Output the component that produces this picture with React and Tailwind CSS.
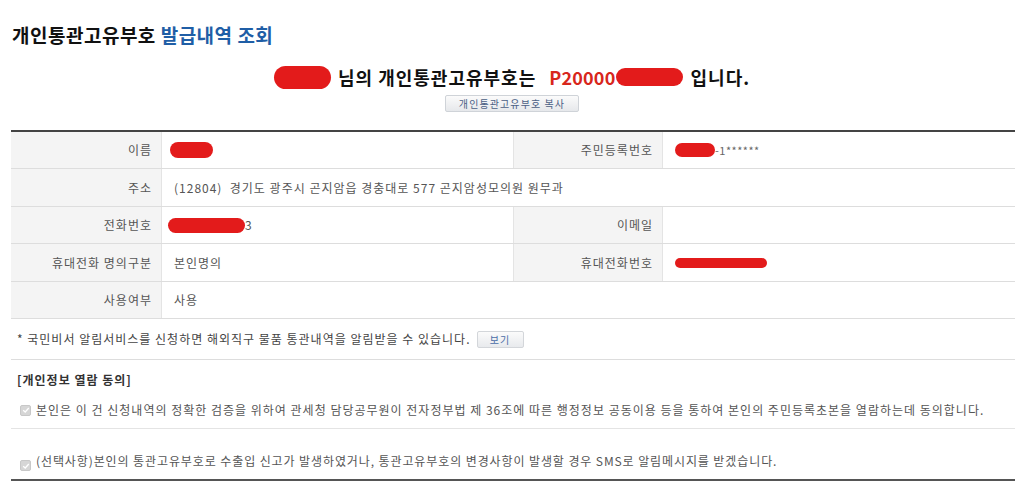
import React from "react";

const font = { fontFamily: '"Noto Sans CJK KR", "Noto Sans", sans-serif' };

function Blob({ className }) {
  return <span className={"inline-block bg-[#e31b1b] rounded-full align-middle " + className} />;
}

function Check() {
  return (
    <span className="inline-flex items-center justify-center w-[11px] h-[11px] bg-[#d6d6d6] border border-[#c8c8c8] rounded-[2px] mr-[5px] align-middle">
      <svg viewBox="0 0 10 10" className="w-[8px] h-[8px]">
        <path d="M1.5 5.2 L4 7.5 L8.5 2.5" fill="none" stroke="#ffffff" strokeWidth="1.6" />
      </svg>
    </span>
  );
}

function Label({ children, w }) {
  return (
    <div className={"flex items-center justify-end pr-[9px] bg-[#f4f4f4] text-[#555] border-r border-[#e4e4e4] " + w}>
      {children}
    </div>
  );
}

function Value({ children, w }) {
  return <div className={"flex items-center pl-[12px] text-[#555] " + w}>{children}</div>;
}

export default function App() {
  return (
    <div className="bg-white w-[1024px] h-[493px] overflow-hidden" style={font}>
      <div className="pl-[12px] pt-[23px] text-[19px] font-bold leading-[24px] text-[#111] tracking-[0.5px]">
        개인통관고유부호 <span className="text-[#1f5ea6]">발급내역 조회</span>
      </div>

      <div className="mt-[18px] flex items-center justify-center text-[18px] font-bold leading-[24px] text-[#111] tracking-[1px]">
        <Blob className="w-[57px] h-[23px] mr-[7px] rounded-[40%]" />
        <span>님의 개인통관고유부호는</span>
        <span className="ml-[13px] text-[#d8261c] tracking-[0.2px]">P20000</span>
        <Blob className="w-[67px] h-[18px] rounded-[30%]" />
        <span className="ml-[8px]">입니다.</span>
      </div>

      <div className="mt-[6px] flex justify-center">
        <button className="h-[17px] px-[13px] text-[10px] leading-[15px] tracking-[1.1px] text-[#4b5f85] bg-gradient-to-b from-[#fbfbfb] to-[#e6e8eb] border border-[#cfd3d8] rounded-[2px]">
          개인통관고유부호 복사
        </button>
      </div>

      <div className="mx-[11px] mt-[18px] w-[1004px] text-[12px] leading-[16px] tracking-[1px]">
        <div className="border-t-2 border-[#444]" />
        <div className="flex h-[37px] border-b border-[#dddddd]">
          <Label w="w-[151px]">이름</Label>
          <Value w="w-[351px]">
            <Blob className="w-[43px] h-[16px] -ml-[4px] rounded-[35%]" />
          </Value>
          <Label w="w-[150px] border-l border-[#e4e4e4]">주민등록번호</Label>
          <Value w="flex-1">
            <Blob className="w-[40px] h-[14px] rounded-[35%]" />
            <span className="text-[11px] text-[#666] tracking-[0.5px]">-1******</span>
          </Value>
        </div>
        <div className="flex h-[38px] border-b border-[#dddddd]">
          <Label w="w-[151px]">주소</Label>
          <Value w="flex-1">(12804)&nbsp;&nbsp;경기도 광주시 곤지암읍 경충대로 577 곤지암성모의원 원무과</Value>
        </div>
        <div className="flex h-[37px] border-b border-[#dddddd]">
          <Label w="w-[151px]">전화번호</Label>
          <Value w="w-[351px]">
            <Blob className="w-[77px] h-[15px] -ml-[6px] rounded-[40%]" />
            <span>3</span>
          </Value>
          <Label w="w-[150px] border-l border-[#e4e4e4]">이메일</Label>
          <Value w="flex-1"></Value>
        </div>
        <div className="flex h-[38px] border-b border-[#dddddd]">
          <Label w="w-[151px]">휴대전화 명의구분</Label>
          <Value w="w-[351px]">본인명의</Value>
          <Label w="w-[150px] border-l border-[#e4e4e4]">휴대전화번호</Label>
          <Value w="flex-1">
            <Blob className="w-[92px] h-[10px] rounded-[40%]" />
          </Value>
        </div>
        <div className="flex h-[37px] border-b border-[#dddddd]">
          <Label w="w-[151px]">사용여부</Label>
          <Value w="flex-1">사용</Value>
        </div>

        <div className="flex items-center h-[41px] pl-[6px] border-b border-[#dddddd] text-[#444]">
          <span>* 국민비서 알림서비스를 신청하면 해외직구 물품 통관내역을 알림받을 수 있습니다.</span>
          <button className="ml-[6px] w-[47px] h-[17px] text-[10px] leading-[15px] text-[#4a6da8] bg-gradient-to-b from-[#fbfbfb] to-[#e8eaed] border border-[#d3d6da] rounded-[2px]">
            보기
          </button>
        </div>

        <div className="border-b border-[#e4e4e4] h-[69px] pl-[6px]">
          <div className="pt-[11px] font-bold text-[#333] leading-[18px]">[개인정보 열람 동의]</div>
          <div className="mt-[12px] pl-[3px] flex items-center text-[#555] leading-[18px]">
            <Check />
            <span>본인은 이 건 신청내역의 정확한 검증을 위하여 관세청 담당공무원이 전자정부법 제 36조에 따른 행정정보 공동이용 등을 통하여 본인의 주민등록초본을 열람하는데 동의합니다.</span>
          </div>
        </div>

        <div className="h-[52px] pl-[9px] pt-[23px] flex items-start text-[#555] leading-[18px] tracking-[0.9px] border-b-2 border-[#555]">
          <span className="mt-[3px]"><Check /></span>
          <span>(선택사항)본인의 통관고유부호로 수출입 신고가 발생하였거나, 통관고유부호의 변경사항이 발생할 경우 SMS로 알림메시지를 받겠습니다.</span>
        </div>
      </div>
    </div>
  );
}
